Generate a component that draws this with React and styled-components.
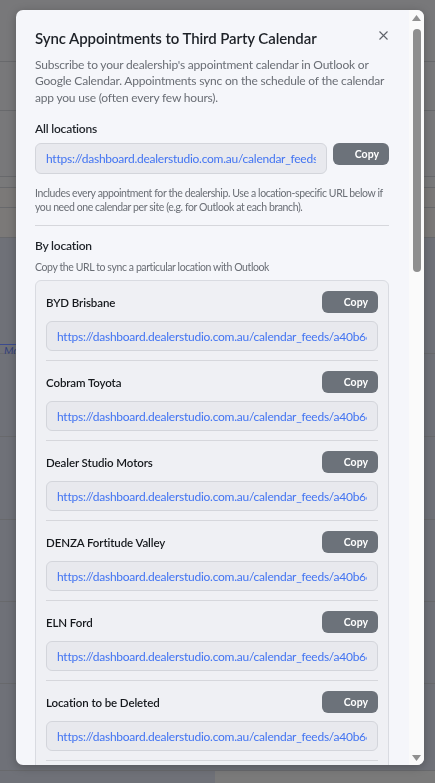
import React from "react";
import styled, { createGlobalStyle } from "styled-components";

const GlobalStyle = createGlobalStyle`
  html, body { margin: 0; padding: 0; }
  body {
    background: #727376;
    font-family: Lato, "Noto Sans", Arial, sans-serif;
    overflow: hidden;
  }
`;

/* ---------- dimmed page underneath the dialog ---------- */

const Page = styled.div`
  display: flex;
  flex-direction: column;
  height: 783px;
  overflow: hidden;
`;

const PageRow = styled.div`
  height: ${(p) => p.$h}px;
  flex: none;
  background: ${(p) => p.$bg || "#78787a"};
  border-bottom: 1px solid #68696c;
  display: flex;
  align-items: flex-end;
`;

const TabLabel = styled.span`
  margin-left: -3px;
  margin-bottom: -5px;
  padding: 0 6px;
  height: 12px;
  border: 1px solid #3b4a8f;
  color: #33407c;
  font-size: 11px;
  font-style: italic;
  line-height: 12px;
`;

const BottomRow = styled.div`
  flex: 1;
  display: grid;
  grid-template-columns: 215px 1fr;
`;

const BottomCell = styled.div`
  background: ${(p) => p.$bg};
`;

/* ---------- dialog ---------- */

const Dialog = styled.div`
  position: fixed;
  top: 10px;
  left: 16px;
  width: 408px;
  height: 755px;
  border-radius: 7px;
  background: #f5f6fa;
  box-shadow: 0 2px 10px rgba(0, 0, 0, 0.25);
  overflow: hidden;
  display: flex;
`;

const Body = styled.div`
  flex: 1;
  min-width: 0;
  overflow: hidden;
  padding: 17px 20px 20px 19px;
`;

/* scroll rail drawn beside the dialog body */
const Rail = styled.div`
  flex: none;
  width: 15px;
  background: #fafafa;
  display: flex;
  flex-direction: column;
  align-items: center;
`;

const RailArrow = styled.div`
  height: 15px;
  flex: none;
  display: flex;
  align-items: center;
  justify-content: center;
`;

const RailTrack = styled.div`
  flex: 1;
  width: 100%;
  display: flex;
  justify-content: center;
  padding-top: 4px;
`;

const RailThumb = styled.div`
  width: 8px;
  margin-left: 1px;
  height: 243px;
  border-radius: 4px;
  background: #8f8f8f;
`;

const Header = styled.div`
  display: flex;
  align-items: flex-start;
  justify-content: space-between;
`;

const Title = styled.h2`
  margin: 0;
  font-size: 15px;
  letter-spacing: -0.1px;
  line-height: 22px;
  font-weight: 600;
  color: #1d2127;
`;

const CloseButton = styled.button`
  border: 0;
  background: none;
  padding: 0;
  margin: 4px 1px 0 0;
  width: 9px;
  height: 9px;
  display: flex;
  cursor: pointer;
`;

const Lead = styled.p`
  margin: 8px 0 0;
  font-size: 12px;
  letter-spacing: -0.2px;
  line-height: 16.4px;
  color: #6a6e75;
`;

const SectionLabel = styled.h3`
  margin: ${(p) => p.$mt || 14}px 0 0;
  font-size: 12px;
  letter-spacing: -0.2px;
  line-height: 18px;
  font-weight: 600;
  color: #1f2329;
`;

const Note = styled.p`
  margin: ${(p) => p.$mt || 0}px 0 0;
  font-size: 10.5px;
  letter-spacing: -0.4px;
  line-height: 14px;
  color: #6a6e75;
`;

const FieldRow = styled.div`
  display: flex;
  align-items: flex-start;
  gap: 6px;
  margin-top: 5px;
`;

const UrlField = styled.input`
  box-sizing: border-box;
  display: block;
  flex: none;
  width: ${(p) => p.$w || "100%"};
  height: ${(p) => p.$h || 31}px;
  margin: 0;
  padding: 0 10px;
  border: 1px solid #d3d5db;
  border-radius: 6px;
  background: #e8e9ee;
  color: #4274f2;
  font-family: inherit;
  font-size: 12px;
  letter-spacing: -0.25px;
  outline: none;
`;

const CopyButton = styled.button`
  box-sizing: border-box;
  flex: none;
  width: 56px;
  height: 22px;
  border: 0;
  border-radius: 6px;
  background: #6c727a;
  color: #fff;
  font-family: inherit;
  font-size: 10.5px;
  font-weight: 700;
  padding: 0 10px 0 0;
  text-align: right;
  cursor: pointer;
`;

const Divider = styled.hr`
  margin: 11px 0 0;
  border: 0;
  border-top: 1px solid #d6d7dc;
`;

const LocationList = styled.div`
  margin-top: 6px;
  border: 1px solid #d9dbe1;
  border-radius: 6px;
  background: #eff0f4;
  padding: 0 10px;
`;

const LocationItem = styled.div`
  display: flex;
  flex-direction: column;
  gap: 8px;
  padding: 10px 0 9px;
  border-bottom: 1px solid #d6d7dc;
`;

const ItemHead = styled.div`
  display: flex;
  align-items: center;
  justify-content: space-between;
`;

const LocationName = styled.span`
  font-size: 11.5px;
  letter-spacing: -0.1px;
  font-weight: 600;
  color: #15181c;
`;

const CloseIcon = () => (
  <svg width="9" height="9" viewBox="0 0 9 9">
    <path d="M0.5 0.5 L8.5 8.5 M8.5 0.5 L0.5 8.5" stroke="#5f636a" strokeWidth="1.1" />
  </svg>
);

const ArrowIcon = ({ down }) => (
  <svg width="9" height="6" viewBox="0 0 9 6">
    <polygon points={down ? "0,0 9,0 4.5,6" : "4.5,0 9,6 0,6"} fill="#909090" />
  </svg>
);

const BASE = "https://dashboard.dealerstudio.com.au/calendar_feeds/";
const FEED = "a40b66c7-2e1d-4f83-9a5c-d1b0e7f4c2a8";

const locations = [
  "BYD Brisbane",
  "Cobram Toyota",
  "Dealer Studio Motors",
  "DENZA Fortitude Valley",
  "ELN Ford",
  "Location to be Deleted",
  "Mazda Springwood",
  "Nissan Ipswich",
];

export default function App() {
  return (
    <>
      <GlobalStyle />
      <Page>
        <PageRow $h={61} />
        <PageRow $h={48} />
        <PageRow $h={65} />
        <PageRow $h={10} $bg="#79797a" />
        <PageRow $h={19} $bg="#7b7978" />
        <PageRow $h={29} $bg="#7b7978" />
        <PageRow $h={115} $bg="#6f7178">
          <TabLabel>Mobile</TabLabel>
        </PageRow>
        <PageRow $h={82} $bg="#6f7178" />
        <PageRow $h={82} $bg="#6f7178" />
        <PageRow $h={81} $bg="#6f7178" />
        <PageRow $h={81} $bg="#6f7178" />
        <PageRow $h={86} $bg="#6f7178" />
        <BottomRow>
          <BottomCell $bg="#6f7178" />
          <BottomCell $bg="#7a7a7a" />
        </BottomRow>
      </Page>

      <Dialog role="dialog" aria-modal="true">
        <Body>
          <Header>
            <Title>Sync Appointments to Third Party Calendar</Title>
            <CloseButton aria-label="Close">
              <CloseIcon />
            </CloseButton>
          </Header>
          <Lead>
            Subscribe to your dealership's appointment calendar in Outlook or
            Google Calendar. Appointments sync on the schedule of the calendar
            app you use (often every few hours).
          </Lead>

          <SectionLabel>All locations</SectionLabel>
          <FieldRow>
            <UrlField readOnly $w="292px" value={BASE + FEED + ".ics"} />
            <CopyButton>Copy</CopyButton>
          </FieldRow>
          <Note $mt={12}>
            Includes every appointment for the dealership. Use a
            location-specific URL below if you need one calendar per site (e.g.
            for Outlook at each branch).
          </Note>
          <Divider />

          <SectionLabel $mt={11}>By location</SectionLabel>
          <Note $mt={5}>Copy the URL to sync a particular location with Outlook</Note>
          <LocationList>
            {locations.map((name) => (
              <LocationItem key={name}>
                <ItemHead>
                  <LocationName>{name}</LocationName>
                  <CopyButton>Copy</CopyButton>
                </ItemHead>
                <UrlField readOnly $h={30} value={BASE + FEED + ".ics"} />
              </LocationItem>
            ))}
          </LocationList>
        </Body>
        <Rail aria-hidden="true">
          <RailArrow>
            <ArrowIcon />
          </RailArrow>
          <RailTrack>
            <RailThumb />
          </RailTrack>
          <RailArrow>
            <ArrowIcon down />
          </RailArrow>
        </Rail>
      </Dialog>
    </>
  );
}
